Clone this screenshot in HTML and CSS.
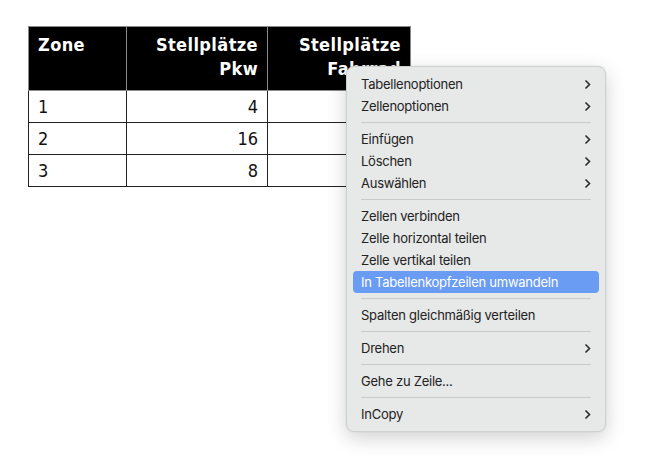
FILE: index.html
```html
<html>
<head>
  <title>Tabelle</title>
  <link rel="stylesheet" href="styles.css">
</head>
<body>
  <div class="page">
    <table class="grid">
      <thead>
        <tr>
          <th class="zone">Zone</th>
          <th class="num">Stellplätze<br>Pkw</th>
          <th class="num">Stellplätze<br>Fahrrad</th>
        </tr>
      </thead>
      <tbody>
        <tr><td>1</td><td class="num">4</td><td class="num"></td></tr>
        <tr><td>2</td><td class="num">16</td><td class="num"></td></tr>
        <tr><td>3</td><td class="num">8</td><td class="num"></td></tr>
      </tbody>
    </table>

    <!-- context menu over the table -->
    <div class="menu">
      <div class="item">Tabellenoptionen <svg class="chev" viewBox="0 0 7 11"><path d="M1.5 1.5 L5.5 5.5 L1.5 9.5"/></svg></div>
      <div class="item">Zellenoptionen <svg class="chev" viewBox="0 0 7 11"><path d="M1.5 1.5 L5.5 5.5 L1.5 9.5"/></svg></div>
      <div class="sep"></div>
      <div class="item">Einfügen <svg class="chev" viewBox="0 0 7 11"><path d="M1.5 1.5 L5.5 5.5 L1.5 9.5"/></svg></div>
      <div class="item">Löschen <svg class="chev" viewBox="0 0 7 11"><path d="M1.5 1.5 L5.5 5.5 L1.5 9.5"/></svg></div>
      <div class="item">Auswählen <svg class="chev" viewBox="0 0 7 11"><path d="M1.5 1.5 L5.5 5.5 L1.5 9.5"/></svg></div>
      <div class="sep"></div>
      <div class="item">Zellen verbinden</div>
      <div class="item">Zelle horizontal teilen</div>
      <div class="item">Zelle vertikal teilen</div>
      <div class="item active">In Tabellenkopfzeilen umwandeln</div>
      <div class="sep"></div>
      <div class="item">Spalten gleichmäßig verteilen</div>
      <div class="sep"></div>
      <div class="item">Drehen <svg class="chev" viewBox="0 0 7 11"><path d="M1.5 1.5 L5.5 5.5 L1.5 9.5"/></svg></div>
      <div class="sep"></div>
      <div class="item">Gehe zu Zeile...</div>
      <div class="sep"></div>
      <div class="item">InCopy <svg class="chev" viewBox="0 0 7 11"><path d="M1.5 1.5 L5.5 5.5 L1.5 9.5"/></svg></div>
    </div>
  </div>
</body>
</html>
```

FILE: styles.css
```css
* {
  margin: 0;
  box-sizing: border-box;
}

body {
  background: #fff;
  width: 647px;
  height: 469px;
  overflow: hidden;
}

.page {
  position: relative;
  padding: 26px 0 0 28px;
}

.grid {
  border-collapse: collapse;
  font-family: "DejaVu Sans Condensed", "DejaVu Sans", sans-serif;
  font-stretch: condensed;
  color: #111;
}

.grid th {
  background: #000;
  color: #fff;
  font-weight: bold;
  font-size: 18px;
  letter-spacing: 0.4px;
  line-height: 24px;
  height: 64px;
  vertical-align: top;
  padding: 6px 9px 0 9px;
  border: 1px solid #8a8a8a;
}

.grid td {
  font-size: 18px;
  height: 32px;
  padding: 0 9px;
  border: 1px solid #222;
}

.grid th:nth-child(1) { width: 98px; text-align: left; }
.grid th:nth-child(2) { width: 141px; }
.grid th:nth-child(3) { width: 143px; }

.num {
  text-align: right;
}

.menu {
  position: absolute;
  left: 346px;
  top: 66px;
  width: 260px;
  padding: 6px 6px;
  background: #e7e8e8;
  border: 1px solid #cfd0d0;
  border-radius: 8px;
  box-shadow: 0 6px 20px rgba(0, 0, 0, 0.18), 0 0 2px rgba(0, 0, 0, 0.1);
  font-family: "Inter", "Noto Sans", sans-serif;
  font-size: 13px;
  letter-spacing: -0.25px;
  color: #222;
}

.item {
  display: flex;
  align-items: center;
  justify-content: space-between;
  height: 22px;
  padding: 0 8px 0 8px;
  border-radius: 4px;
}

.item.active {
  background: #6b9cf4;
  color: #fff;
}

.chev {
  width: 7px;
  height: 11px;
  fill: none;
  stroke: #2a2a2a;
  stroke-width: 1.6;
}

.sep {
  height: 1px;
  background: #c9caca;
  margin: 5px 8px;
}
```
